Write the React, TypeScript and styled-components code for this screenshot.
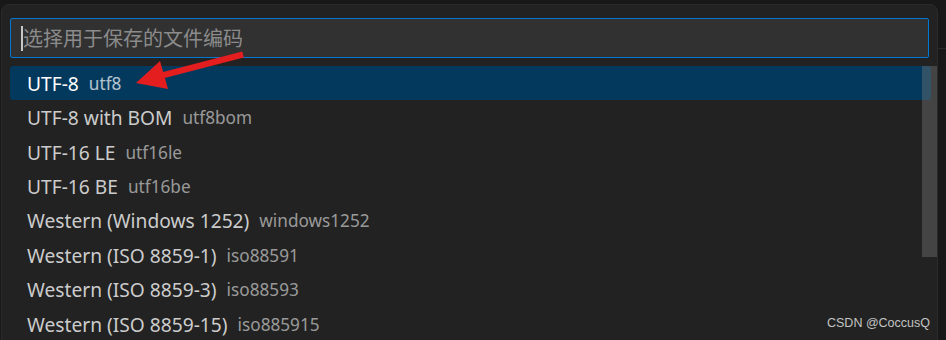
import React from "react";
import styled, { createGlobalStyle } from "styled-components";

const Global = createGlobalStyle`
  html, body { margin: 0; padding: 0; background: #181818; overflow: hidden; }
  * { box-sizing: border-box; }
`;

const Page = styled.div`
  position: relative;
  display: flex;
  width: 946px;
  height: 340px;
  background: #181818;
  overflow: hidden;
  font-family: "Noto Sans", "Open Sans", sans-serif;
`;

const Panel = styled.div`
  margin: 4px 0 0 1px;
  width: 937px;
  height: 350px;
  background: #222222;
  border: 1px solid #2b2b2b;
  border-radius: 8px 8px 0 0;
  display: flex;
  flex-direction: column;
  padding-top: 13px;
`;

const Side = styled.div`
  flex: 1;
  display: flex;
  flex-direction: column;
`;

const SideTop = styled.div`
  height: 49px;
  border-bottom: 1px solid #2b2b2b;
`;

const InputWrap = styled.div`
  padding: 0 8px;
`;

const Input = styled.div`
  height: 40px;
  background: #313131;
  border: 1px solid #0078d4;
  border-radius: 2px;
  display: flex;
  align-items: center;
  padding-left: 10px;
`;

const Caret = styled.span`
  width: 2px;
  height: 25px;
  background: #c8c8c8;
`;

const Placeholder = styled.span`
  font-family: "Noto Sans CJK SC", sans-serif;
  font-size: 20px;
  color: #8b8b8b;
  line-height: 1;
`;

const List = styled.div`
  position: relative;
  margin-top: 8px;
  padding: 0 6px 0 8px;
  display: flex;
  flex-direction: column;
`;

const Row = styled.div<{ $selected?: boolean }>`
  height: 34.45px;
  flex-shrink: 0;
  display: flex;
  align-items: center;
  padding-left: 17px;
  border-radius: 3px;
  background: ${(p) => (p.$selected ? "#04395e" : "transparent")};
  color: ${(p) => (p.$selected ? "#ffffff" : "#cccccc")};
  font-size: 19.2px;
  white-space: pre;
`;

const Label = styled.span``;

const Desc = styled.span`
  margin-left: 10px;
  font-size: 17.2px;
  opacity: 0.7;
`;

const Scrollbar = styled.div`
  position: absolute;
  top: 0;
  right: 0;
  width: 15px;
  height: 191px;
  background: rgba(121, 121, 121, 0.4);
`;

const Arrow = styled.svg`
  position: absolute;
  left: 0;
  top: 0;
  pointer-events: none;
`;

const Watermark = styled.div`
  position: absolute;
  right: 16px;
  bottom: 10px;
  font-family: "Liberation Sans", Arial, sans-serif;
  font-size: 12.5px;
  color: #c4c4c4;
`;

const items: [string, string][] = [
  ["UTF-8", "utf8"],
  ["UTF-8 with BOM", "utf8bom"],
  ["UTF-16 LE", "utf16le"],
  ["UTF-16 BE", "utf16be"],
  ["Western (Windows 1252)", "windows1252"],
  ["Western (ISO 8859-1)", "iso88591"],
  ["Western (ISO 8859-3)", "iso88593"],
  ["Western (ISO 8859-15)", "iso885915"],
];

export default function App() {
  return (
    <>
      <Global />
      <Page>
        <Panel>
          <InputWrap>
            <Input>
              <Caret />
              <Placeholder>选择用于保存的文件编码</Placeholder>
            </Input>
          </InputWrap>
          <List>
            {items.map(([l, d], i) => (
              <Row key={l} $selected={i === 0}>
                <Label>{l}</Label>
                <Desc>{d}</Desc>
              </Row>
            ))}
            <Scrollbar />
          </List>
        </Panel>
        <Side>
          <SideTop />
        </Side>
        <Arrow width="946" height="340" viewBox="0 0 946 340">
          <line x1="243" y1="54.5" x2="160" y2="76" stroke="#e41e1e" strokeWidth="6" />
          <polygon points="136,83 160,61 168,89" fill="#e41e1e" />
        </Arrow>
        <Watermark>CSDN @CoccusQ</Watermark>
      </Page>
    </>
  );
}
